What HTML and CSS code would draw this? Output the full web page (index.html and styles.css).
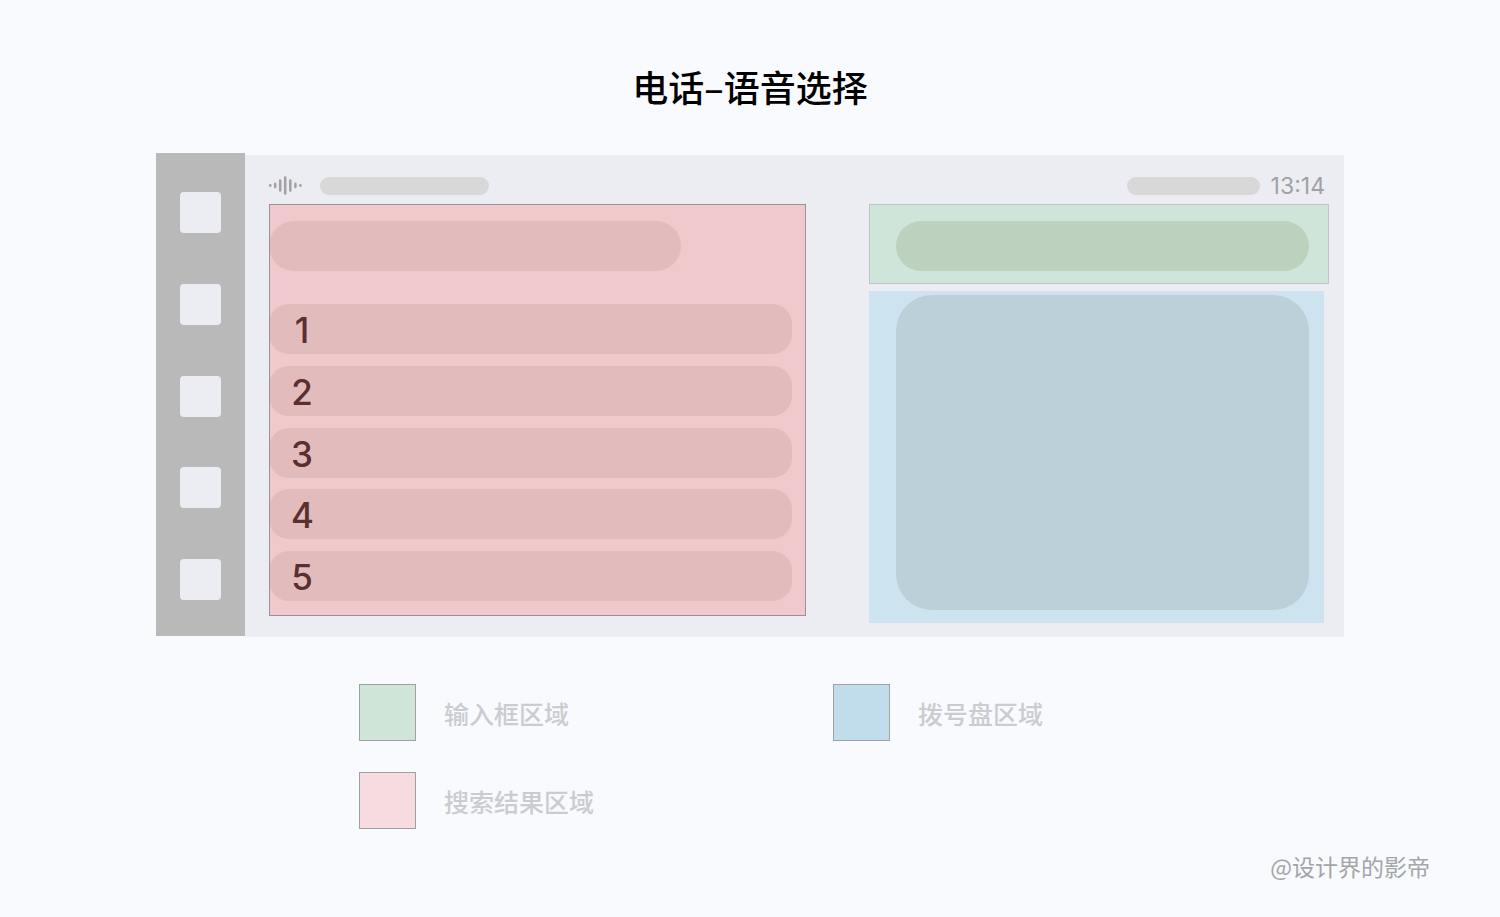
FILE: index.html
```html
<!DOCTYPE html>
<html lang="zh-CN">
<head>
  <meta charset="UTF-8">
  <meta name="viewport" content="width=device-width, initial-scale=1.0">
  <title>电话–语音选择</title>
  <link rel="stylesheet" href="styles.css">
</head>
<body>
  <h1 class="title">电话–语音选择</h1>

  <main class="device">
    <nav class="sidebar">
      <span class="app"></span>
      <span class="app"></span>
      <span class="app"></span>
      <span class="app"></span>
      <span class="app"></span>
    </nav>

    <div class="screen">
      <header class="status">
        <svg class="wave" viewBox="0 0 34 20" width="34" height="20" aria-hidden="true">
          <g stroke="#a3a3a6" stroke-width="2.6" stroke-linecap="round">
            <path d="M1.3 9.3v.4M6.2 7.9v3.2M11.2 4.5v10M16.2 1.5v16M21.3 4.5v10M26.4 7.9v3.2M31.4 9.3v.4"/>
          </g>
        </svg>
        <span class="bar bar-left"></span>
        <span class="bar bar-right"></span>
        <time class="clock">13:14</time>
      </header>

      <div class="areas">
        <section class="results">
          <div class="query"></div>
          <ol class="list">
            <li><span class="num">1</span></li>
            <li><span class="num">2</span></li>
            <li><span class="num">3</span></li>
            <li><span class="num">4</span></li>
            <li><span class="num">5</span></li>
          </ol>
        </section>

        <div class="side">
          <section class="field"><div class="field-box"></div></section>
          <section class="dial"><div class="dial-pad"></div></section>
        </div>
      </div>
    </div>
  </main>

  <ul class="legend">
    <li><span class="swatch green"></span>输入框区域</li>
    <li><span class="swatch blue"></span>拨号盘区域</li>
    <li><span class="swatch pink"></span>搜索结果区域</li>
  </ul>

  <footer class="credit">@设计界的影帝</footer>
</body>
</html>
```
FILE: styles.css
```css
* {
  margin: 0;
  padding: 0;
  box-sizing: border-box;
}

body {
  background-color: #f8fafe;
  font-family: "Noto Sans CJK SC", sans-serif;
}

ul, ol {
  list-style: none;
}

.title {
  padding-top: 62px;
  font-size: 36px;
  font-weight: 500;
  line-height: 48px;
  text-align: center;
  color: #000;
}

/* Tela do carro */
.device {
  display: flex;
  margin: 43px 156px 0;
}

.sidebar {
  display: flex;
  flex-direction: column;
  justify-content: space-between;
  width: 89px;
  padding: 39px 0 36px;
  margin-bottom: 1px;
  align-items: center;
  background-color: #b9b9b9;
}

.app {
  width: 41px;
  height: 41px;
  border-radius: 4px;
  background-color: #ecedf3;
}

.screen {
  flex: 1;
  margin-top: 2px;
  padding: 0 15px 14px 24px;
  background-color: #ecedf3;
}

.status {
  display: flex;
  align-items: center;
  height: 49px;
  padding: 12px 4px 0 0;
}

.bar {
  height: 18px;
  border-radius: 9px;
  background-color: #d8d8d8;
}

.bar-left {
  width: 169px;
  margin-left: 17px;
}

.bar-right {
  width: 133px;
  margin-left: auto;
}

.clock {
  margin-left: 11px;
  font-family: Inter, sans-serif;
  font-size: 23px;
  line-height: 24px;
  color: #a1a1a4;
}

.areas {
  display: grid;
  grid-template-columns: 537fr 460fr;
  column-gap: 63px;
  align-items: start;
}

.results {
  padding: 16px 13px 14px 0;
  border: 1px solid #97929a;
  background-color: #f0c9cd;
}

.query {
  width: 79%;
  height: 50px;
  margin: 0 0 33px -1px;
  border-radius: 25px;
  background-color: rgba(170, 140, 120, 0.2);
}

.list {
  display: flex;
  flex-direction: column;
  justify-content: space-between;
  height: 297px;
  margin-left: -1px;
}

.list li {
  height: 50px;
  padding-left: 22px;
  border-radius: 20px;
  background-color: rgba(170, 140, 120, 0.2);
}

.num {
  display: block;
  width: 22px;
  font-family: Inter, sans-serif;
  font-size: 35px;
  font-weight: 500;
  line-height: 52px;
  text-align: center;
  color: #5b2f31;
}

.field {
  padding: 16px 19px 12px 26px;
  border: 1px solid #bfc5c6;
  background-color: #d0e5d9;
}

.field-box {
  height: 50px;
  border-radius: 25px;
  background-color: #bcd2bf;
}

.dial {
  margin: 7px 5px 0 0;
  padding: 4px 15px 13px 27px;
  background-color: #cde3ef;
}

.dial-pad {
  height: 315px;
  border-radius: 36px;
  background-color: #bcd0d9;
}

/* Legenda */
.legend {
  display: grid;
  grid-template-columns: 474px 1fr;
  row-gap: 31px;
  margin: 47px 156px 0 359px;
  font-size: 25px;
  font-weight: 500;
  color: #cbccd0;
}

.legend li {
  display: flex;
  align-items: center;
  gap: 28px;
  line-height: 36px;
}

.swatch {
  width: 57px;
  height: 57px;
  border: 1px solid #9fa1a3;
}

.green {
  background-color: #cee5d8;
}

.blue {
  background-color: #c1ddeb;
}

.pink {
  background-color: #f6dbe1;
}

.credit {
  padding: 20px 70px 0 0;
  font-size: 23px;
  line-height: 34px;
  text-align: right;
  color: #a4a5a8;
}
```
